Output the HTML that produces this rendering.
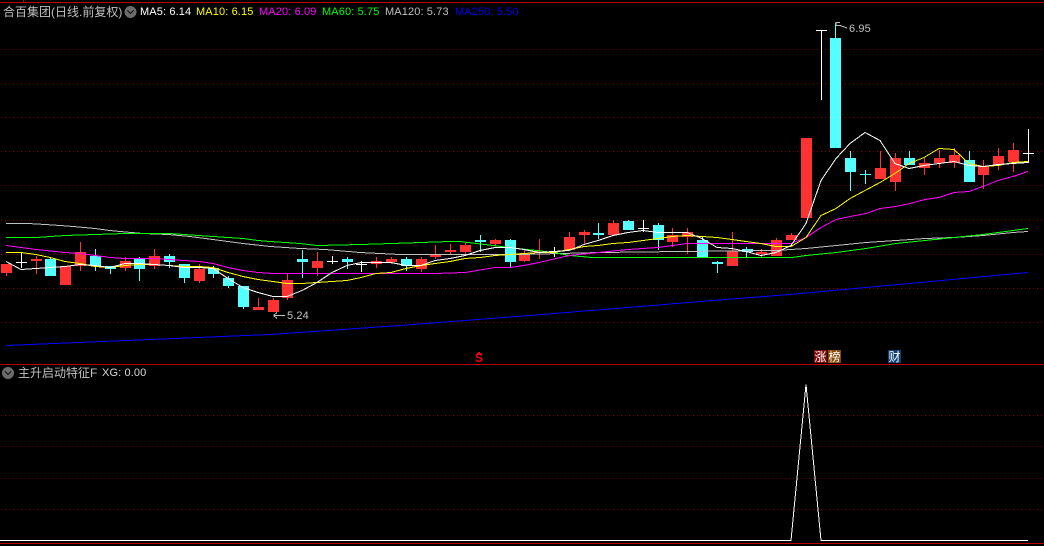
<!DOCTYPE html>
<html lang="zh">
<head>
<meta charset="utf-8">
<title>合百集团</title>
<style>
html,body{margin:0;padding:0;background:#000;}
#p{position:relative;width:1044px;height:546px;overflow:hidden;background:#000;}
svg{position:absolute;left:0;top:0;}
.t{position:absolute;white-space:nowrap;font-family:"Liberation Sans","WenQuanYi Zen Hei","Noto Sans CJK SC",sans-serif;font-size:11px;letter-spacing:.12px;line-height:14px;color:#c0c0c0;}
.c{font-size:12px;letter-spacing:0;}
.b{position:absolute;top:350px;width:13px;height:13px;color:#fff;font:12px/13px "WenQuanYi Zen Hei","Noto Sans CJK SC",sans-serif;text-align:center;}
</style>
</head>
<body>
<div id="p">
<svg width="1044" height="546" viewBox="0 0 1044 546" xmlns="http://www.w3.org/2000/svg" shape-rendering="crispEdges">
<path fill="#c00000" d="M0 2h1044v1H0zM23 0h1v2h-1zM0 364h1044v1H0zM0 543h1044v1H0z"/>
<path stroke="#8c0000" stroke-width="1" stroke-dasharray="1 3" fill="none" d="M1 49.5H1044M1 83.5H1044M1 117.5H1044M1 151.5H1044M1 185.5H1044M1 220.5H1044M1 254.5H1044M1 288.5H1044M1 322.5H1044M1 415.5H1044M1 446.5H1044M1 478.5H1044M1 509.5H1044"/>

<!-- red candles -->
<path fill="#ff3232" d="M1 264h11v9H1zM6 264h1v12H6z
M31 259h11v2H31zM36 256h1v18h-1z
M60 266h11v19H60z
M75 252h11v14H75zM80 242h1v29h-1z
M120 261h11v7h-11zM125 257h1v14h-1z
M149 256h11v10h-11zM154 249h1v20h-1z
M194 269h11v12h-11zM199 264h1v19h-1z
M253 307h11v3h-11zM258 298h1v12h-1z
M268 300h11v12h-11zM273 298h1v14h-1z
M282 280h11v18h-11zM287 274h1v26h-1z
M312 261h11v7h-11zM317 252h1v24h-1z
M371 261h11v3h-11zM376 257h1v11h-1z
M386 259h11v3h-11zM391 257h1v7h-1z
M416 259h11v10h-11zM421 257h1v15h-1z
M430 254h11v3h-11zM435 245h1v14h-1z
M445 250h11v2h-11zM450 244h1v10h-1z
M460 245h11v7h-11zM465 243h1v11h-1z
M490 240h11v4h-11zM495 239h1v7h-1z
M519 253h11v8h-11zM524 250h1v12h-1z
M534 251h11v2h-11zM539 239h1v20h-1z
M564 237h11v13h-11zM569 232h1v18h-1z
M579 232h11v3h-11zM584 230h1v14h-1z
M608 223h11v12h-11zM613 220h1v15h-1z
M667 235h11v7h-11zM672 228h1v19h-1z
M682 232h11v5h-11zM687 228h1v26h-1z
M727 251h11v15h-11zM732 232h1v34h-1z
M756 252h11v2h-11zM761 249h1v8h-1z
M771 240h11v16h-11zM776 238h1v18h-1z
M786 235h11v5h-11zM791 233h1v7h-1z
M801 138h11v80h-11z
M875 168h11v11h-11zM880 151h1v28h-1z
M890 158h11v24h-11zM895 153h1v38h-1z
M919 163h11v5h-11zM924 158h1v17h-1z
M934 158h11v5h-11zM939 150h1v18h-1z
M949 155h11v8h-11zM954 148h1v20h-1z
M978 166h11v9h-11zM983 160h1v29h-1z
M993 156h11v9h-11zM998 148h1v22h-1z
M1008 150h11v12h-11zM1013 143h1v29h-1z"/>

<!-- cyan candles -->
<path fill="#54ffff" d="M45 259h11v17H45zM50 257h1v2h-1z
M90 256h11v10H90zM95 249h1v22H95z
M105 266h11v3h-11zM110 266h1v8h-1z
M134 259h11v10h-11zM139 257h1v24h-1z
M164 256h11v6h-11zM169 254h1v14h-1z
M179 264h11v14h-11zM184 264h1v19h-1z
M208 268h11v6h-11zM213 266h1v12h-1z
M223 278h11v8h-11zM228 276h1v12h-1z
M238 286h11v21h-11zM243 286h1v23h-1z
M297 259h11v3h-11zM302 250h1v28h-1z
M342 259h11v3h-11zM347 257h1v12h-1z
M401 259h11v7h-11zM406 257h1v14h-1z
M475 240h11v2h-11zM480 235h1v17h-1z
M505 240h11v22h-11zM510 239h1v29h-1z
M593 233h11v2h-11zM598 223h1v16h-1z
M623 221h11v9h-11zM628 220h1v10h-1z
M653 225h11v15h-11zM658 223h1v27h-1z
M697 240h11v17h-11zM702 237h1v20h-1z
M712 262h11v2h-11zM717 261h1v12h-1z
M742 249h11v3h-11zM746 247h1v10h-1z
M830 38h11v110h-11zM835 23h1v15h-1z
M845 158h11v14h-11zM850 151h1v40h-1z
M860 174h11v1h-11zM865 170h1v14h-1z
M904 158h11v7h-11zM909 151h1v14h-1z
M964 160h11v22h-11zM969 151h1v31h-1z"/>

<!-- white crosses -->
<path fill="#fff" d="M16 262h11v1H16zM21 253h1v15h-1z
M327 261h11v1h-11zM332 256h1v8h-1z
M356 264h11v1h-11zM361 261h1v11h-1z
M549 251h11v1h-11zM554 247h1v10h-1z
M638 228h11v1h-11zM643 220h1v12h-1z
M816 30h11v1h-11zM821 30h1v70h-1z
M1023 153h11v1h-11zM1028 129h1v34h-1z"/>

<!-- MA250 -->
<polyline fill="none" stroke="#0000ff" points="6,345.5 150,339.5 270,334.5 400,325.5 530,315.5 725,299.5 790,294.5 1028,272.5"/>
<!-- MA120 -->
<polyline fill="none" stroke="#c0c0c0" points="6,223.5 28,223.5 45,224.5 60,225.5 73,226.5 95,228.5 110,230.5 120,231.5 143,233.5 168,234.5 190,236.5 213,239.5 243,243.5 270,246.5 300,248.5 325,249.5 360,252.5 400,254.5 520,254.5 600,252.5 680,251.5 776,250.5 806,248.5 836,245.5 866,242.5 896,240.5 925,238.5 954,237.5 983,235.5 1013,232.5 1028,231.5"/>
<!-- MA60 -->
<polyline fill="none" stroke="#00ff00" points="6,237.5 36,237.5 65,235.5 95,234.5 125,233.5 154,233.5 169,233.5 184,234.5 213,236.5 243,238.5 258,240.5 270,241.5 300,243.5 317,245.5 361,244.5 391,243.5 421,242.5 450,241.5 460,241.5 493,245.5 517,248.5 537,250.5 553,252.5 570,255.5 592,257.5 776,257.5 792,257.5 806,255.5 836,252.5 866,248.5 896,243.5 925,240.5 954,237.5 983,234.5 1013,230.5 1028,228.5"/>
<!-- MA20 -->
<polyline fill="none" stroke="#ff00ff" points="6,245.5 21,247.5 36,249.5 65,252.5 80,253.5 95,255.5 110,257.5 125,258.5 154,258.5 169,259.5 184,260.5 199,261.5 213,263.5 228,267.5 243,270.5 258,272.5 273,273.5 332,273.5 391,273.5 435,273.5 465,272.5 495,267.5 510,267.5 524,265.5 539,262.5 569,255.5 598,252.5 628,249.5 658,247.5 687,243.5 702,243.5 776,243.5 791,243.5 806,237.5 821,227.5 836,219.5 850,216.5 866,213.5 880,208.5 896,206.5 910,203.5 925,199.5 939,197.5 954,192.5 969,191.5 983,186.5 998,180.5 1013,176.5 1028,171.5"/>
<!-- MA10 -->
<polyline fill="none" stroke="#ffff00" points="6,252.5 21,252.5 36,254.5 50,257.5 65,261.5 80,263.5 95,266.5 110,267.5 125,265.5 139,264.5 154,264.5 169,265.5 184,266.5 199,266.5 213,267.5 228,272.5 243,276.5 258,279.5 273,281.5 287,283.5 302,283.5 317,282.5 332,281.5 347,280.5 361,277.5 376,273.5 391,272.5 406,268.5 421,265.5 435,263.5 450,261.5 465,258.5 480,257.5 495,255.5 510,254.5 524,253.5 539,252.5 554,252.5 569,249.5 584,246.5 598,245.5 613,243.5 628,242.5 643,240.5 658,238.5 672,236.5 687,235.5 702,236.5 717,237.5 732,239.5 746,241.5 761,243.5 776,246.5 791,246.5 806,237.5 821,215.5 836,208.5 850,198.5 865,190.5 880,182.5 895,173.5 909,163.5 924,157.5 939,148.5 954,149.5 969,163.5 983,166.5 998,165.5 1013,162.5 1028,161.5"/>
<!-- MA5 -->
<polyline fill="none" stroke="#ffffff" points="6,261.5 21,269.5 36,268.5 50,267.5 65,266.5 80,264.5 95,265.5 110,267.5 125,263.5 139,263.5 154,264.5 169,265.5 184,267.5 199,267.5 213,268.5 228,278.5 243,287.5 258,292.5 273,296.5 287,296.5 302,290.5 317,282.5 332,272.5 347,265.5 361,262.5 376,262.5 391,262.5 406,265.5 421,265.5 435,260.5 450,258.5 465,255.5 480,250.5 495,247.5 510,247.5 524,249.5 539,252.5 554,251.5 569,250.5 584,244.5 598,240.5 613,235.5 628,232.5 643,230.5 658,232.5 672,232.5 687,232.5 702,238.5 717,247.5 732,248.5 746,251.5 761,255.5 776,252.5 791,245.5 806,223.5 821,180.5 836,158.5 850,143.5 865,132.5 880,140.5 895,163.5 909,168.5 924,165.5 939,163.5 954,161.5 969,165.5 983,166.5 998,164.5 1013,163.5 1028,162.5"/>

<!-- high/low markers -->
<path fill="none" stroke="#c0c0c0" d="M273.5 315.5L277 312.5M273.5 315.5L277 318.5M274 315.5H285M836 25.5H840L847 28"/>
<path fill="none" stroke="#c0c0c0" d="M836 25.5V22.5H840"/>

<!-- icons -->
<circle cx="130.5" cy="12" r="6" fill="#6c6c6c"/>
<path d="M127.5 10.5L130.5 13.5L133.5 10.5" stroke="#111" stroke-width="1.4" fill="none"/>
<circle cx="8" cy="373" r="6" fill="#6c6c6c"/>
<path d="M5 371.5L8 374.5L11 371.5" stroke="#111" stroke-width="1.4" fill="none"/>

<!-- S marker caret -->
<path fill="#ff0000" d="M478 352h2v1h1v2h-4v-2h1z"/>

<!-- lower indicator -->
<polyline fill="none" stroke="#ffffff" points="0,540.5 791,540.5 806,384.5 821,540.5 1028,540.5"/>
</svg>

<div class="t c" style="left:3px;top:5px;">合百集团(日线.前复权)</div>
<div class="t" style="left:140px;top:5px;color:#fff;">MA5: 6.14</div>
<div class="t" style="left:196px;top:5px;color:#ffff00;">MA10: 6.15</div>
<div class="t" style="left:259px;top:5px;color:#ff00ff;">MA20: 6.09</div>
<div class="t" style="left:322px;top:5px;color:#00ff00;">MA60: 5.75</div>
<div class="t" style="left:385px;top:5px;color:#c0c0c0;">MA120: 5.73</div>
<div class="t" style="left:455px;top:5px;color:#0000e6;">MA250: 5.50</div>

<div class="t c" style="left:18px;top:366px;">主升启动特征F</div>
<div class="t" style="left:102px;top:366px;color:#d8d8d8;">XG: 0.00</div>

<div class="t" style="left:287px;top:309px;">5.24</div>
<div class="t" style="left:849px;top:22px;">6.95</div>

<div class="t" style="left:475px;top:353px;color:#ff0000;font-weight:bold;font-size:12px;line-height:11px;">S</div>
<div class="b" style="left:814px;background:#800808;">涨</div>
<div class="b" style="left:828px;background:#8a4a08;">榜</div>
<div class="b" style="left:888px;background:#0f3f73;">财</div>
</div>
</body>
</html>
